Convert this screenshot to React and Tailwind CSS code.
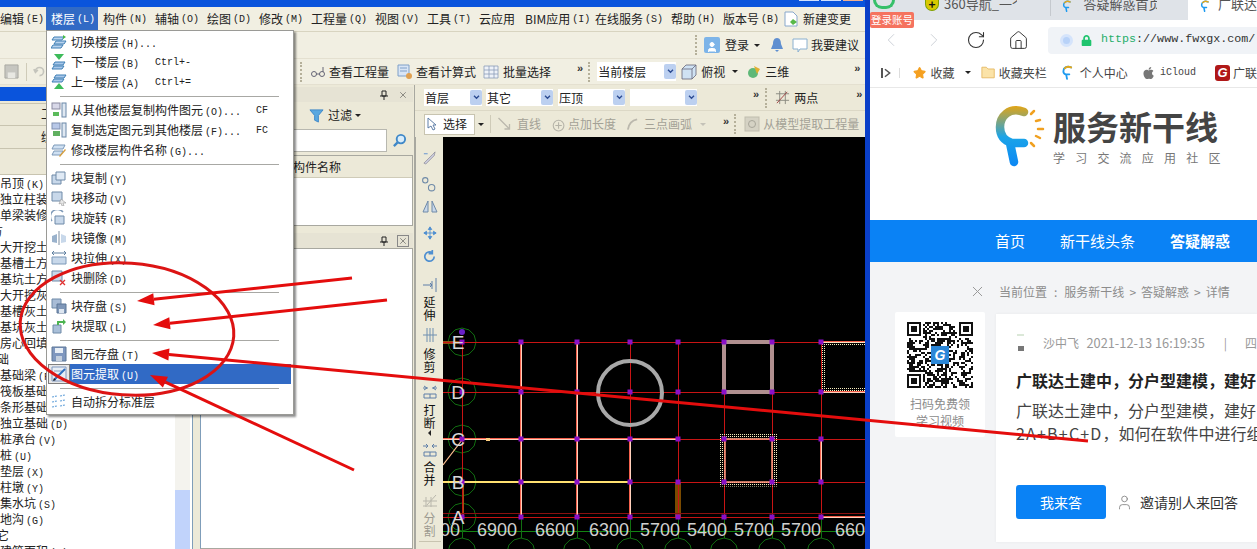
import React from "react";
import { ChevronLeft, ChevronRight, RotateCw, Home, Star, X, User } from "lucide-react";
import { FaApple, FaLock } from "react-icons/fa";

const menuBar = [
  ["编辑", "(E)", "w-[51px] -ml-[5px]"],
  ["楼层", "(L)", "w-[52px] bg-[#316ac5] text-white"],
  ["构件", "(N)", "w-[52px]"],
  ["辅轴", "(O)", "w-[52px]"],
  ["绘图", "(D)", "w-[52px]"],
  ["修改", "(M)", "w-[52px]"],
  ["工程量", "(Q)", "w-[64px]"],
  ["视图", "(V)", "w-[52px]"],
  ["工具", "(T)", "w-[52px]"],
  ["云应用", "", "w-[46px]"],
  ["BIM应用", "(I)", "w-[70px]"],
  ["在线服务", "(S)", "w-[76px]"],
  ["帮助", "(H)", "w-[52px]"],
  ["版本号", "(B)", "w-[63px]"],
];

const tree = [
  ["吊顶", "(K)"], ["独立柱装修", ""], ["单梁装修", ""], ["土方", "", "-ml-[21px]"], ["大开挖土方", ""], ["基槽土方", ""],
  ["基坑土方", ""], ["大开挖灰土", ""], ["基槽灰土", ""], ["基坑灰土", ""], ["房心回填", ""], ["基础", "", "-ml-[15px]"],
  ["基础梁", "(F)"], ["筏板基础", ""], ["条形基础", ""], ["独立基础", "(D)"], ["桩承台", "(V)"], ["桩", "(U)"],
  ["垫层", "(X)"], ["柱墩", "(Y)"], ["集水坑", "(S)"], ["地沟", "(G)"], ["其它", "", "-ml-[15px]"], ["建筑面积", "(A)"],
];

function K({ children }) {
  return <span className="font-['Liberation_Mono',monospace] text-[10px] ml-[2px]">{children}</span>;
}

function Ic({ children, className = "" }) {
  const size = className.includes("w-[") ? "" : "w-[16px] h-[16px]";
  return <svg viewBox="0 0 16 16" className={`shrink-0 ${size} ${className}`}>{children}</svg>;
}

const menuIcons = {
  floors: <><path d="M3 3h10l-2 3H1zM5 7h10l-2 3H3zM2 11h10l-2 3H0z" fill="#b9d3ee" stroke="#3f7fb5" /><path d="M12 1l3 2-3 2z" fill="#46b946" /></>,
  down: <><path d="M3 0h10L8 6z" fill="#3dbb5a" /><path d="M4 8h10l-2 3H2zM3 12h10l-2 3H1z" fill="#a9c8ea" stroke="#3f7fb5" /></>,
  up: <><path d="M5 1h10l-2 3H3zM3 5h10l-2 3H1z" fill="#a9c8ea" stroke="#3f7fb5" /><path d="M3 15h10L8 9z" fill="#3dbb5a" /></>,
  copyIn: <><rect x="1" y="1" width="8" height="6" fill="#d8d8e8" stroke="#8a8aa0" /><path d="M2 10h6v4H2z" fill="#5bbb5b" /><rect x="11" y="1" width="4" height="14" fill="#dfe8f2" stroke="#6b88a8" /></>,
  copyOut: <><rect x="1" y="1" width="8" height="6" fill="#b8c8e8" stroke="#7f8fb0" /><path d="M2 9h7v5H2z" fill="#60b060" /><rect x="11" y="1" width="4" height="14" fill="#dfe8f2" stroke="#6b88a8" /></>,
  rename: <><path d="M3 3h11l-2 4H1zM3 9h9l-2 4H1z" fill="#cfe0f2" stroke="#7c99b8" /><path d="M8 14l6-7 1 1-6 7z" fill="#d8a040" /></>,
  blockCopy: <><path d="M1 5h9v9H1z" fill="#c8d8ea" stroke="#6f8aa8" /><path d="M5 2h9v8H5z" fill="#e0eaf5" stroke="#6f8aa8" /></>,
  blockMove: <><path d="M1 2h10v9H1z" fill="#c8d8ea" stroke="#6f8aa8" /><path d="M10 9l5 4-3 0 1 3-2 0-1-3-2 1z" fill="#e8e8e8" stroke="#888" strokeWidth=".5" /></>,
  blockRotate: <><path d="M4 6h9v8H4z" fill="#c8d8ea" stroke="#6f8aa8" /><path d="M1 11A7 7 0 0 1 12 2" fill="none" stroke="#7f9ab8" strokeWidth="1.5" /></>,
  mirror: <><path d="M1 6l5-2v9l-5-1z" fill="#9ab2cc" /><path d="M15 6l-5-2v9l5-1z" fill="#c8d8ea" /><path d="M8 1v14" stroke="#7f8fa0" /></>,
  stretch: <><path d="M1 7h14v7H1z" fill="#c8d8ea" stroke="#7c99b8" /><path d="M1 3h14M1 3l2-2M1 3l2 2M15 3l-2-2M15 3l-2 2" stroke="#5f7f9f" fill="none" /></>,
  del: <><path d="M1 1h10v10H1z" fill="#c8d8ea" stroke="#6f8aa8" /><path d="M9 10l5 5M14 10l-5 5" stroke="#e03030" strokeWidth="1.3" /></>,
  blockSave: <><path d="M1 1h9v9H1z" fill="#a8bcd6" stroke="#6f8aa8" /><path d="M6 6h9v9H6z" fill="#7f97b8" stroke="#5d7697" /><rect x="8" y="11" width="5" height="4" fill="#dde6f0" /></>,
  blockGet: <><path d="M2 7h8v8H2z" fill="#a9bfd8" stroke="#6f8aa8" /><path d="M6 7V3h6V1l3 3-3 3V5H8v2z" fill="#4cb450" /></>,
  save: <><path d="M1 1h14v14H1z" fill="#7f97bf" stroke="#5d7697" /><rect x="4" y="2" width="8" height="5" fill="#e8eef5" /><rect x="5" y="10" width="6" height="5" fill="#c4cfdd" /></>,
  extract: <><path d="M1 1h14v14H1z" fill="#e8eef5" stroke="#7f97bf" /><path d="M3 5h8M3 9h5" stroke="#8aa0bf" /><path d="M3 14L14 3" stroke="#2f6fc0" strokeWidth="2" /><path d="M2 15l3-1-2-2z" fill="#222" /></>,
  split: <><path d="M1 3l5-1M9 2l5-1M1 8l5-1M9 7l5-1M1 13l5-1M9 12l5-1" stroke="#6fa8dc" strokeWidth="1.2" strokeDasharray="2 1" /></>,
};

const menuGroups = [
  [
    ["切换楼层", "(H)...", "", "floors"],
    ["下一楼层", "(B)", "Ctrl+-", "down"],
    ["上一楼层", "(A)", "Ctrl+=", "up"],
  ],
  [
    ["从其他楼层复制构件图元", "(O)...", "CF", "copyIn"],
    ["复制选定图元到其他楼层", "(F)...", "FC", "copyOut"],
    ["修改楼层构件名称", "(G)...", "", "rename"],
  ],
  [
    ["块复制", "(Y)", "", "blockCopy"],
    ["块移动", "(V)", "", "blockMove"],
    ["块旋转", "(R)", "", "blockRotate"],
    ["块镜像", "(M)", "", "mirror"],
    ["块拉伸", "(X)", "", "stretch"],
    ["块删除", "(D)", "", "del"],
  ],
  [
    ["块存盘", "(S)", "", "blockSave"],
    ["块提取", "(L)", "", "blockGet"],
  ],
  [
    ["图元存盘", "(T)", "", "save"],
    ["图元提取", "(U)", "", "extract", true],
  ],
  [["自动拆分标准层", "", "", "split"]],
];

function FloorMenu() {
  return (
    <div className="absolute left-[46px] top-[30px] w-[248px] h-[385px] z-10 bg-white border border-[#9a9a96] shadow-[2px_2px_2px_rgba(0,0,0,0.45)] text-[12px] text-[#222] pt-[1px]">
      {menuGroups.map((group, g) => (
        <div key={g}>
          {g > 0 && <div className="h-[8px] flex items-center pl-[13px]"><div className="w-[219px] h-px bg-[#a8a8a4]" /></div>}
          {group.map(([label, key, shortcut, icon, active]) => (
            <div key={label} className="h-[20px] flex items-center">
              <div className={`w-[22px] h-[20px] ml-px flex items-center justify-center ${active ? "bg-[#e8e8e8] border border-[#7f7f7f]" : ""}`}>
                <Ic>{menuIcons[icon]}</Ic>
              </div>
              <div className={`flex-1 h-[20px] flex items-center mr-[2px] ${active ? "bg-[#316ac5] text-white" : ""}`}>
                <span className="ml-[1px] w-[84px] whitespace-nowrap">{label}<K>{key}</K></span>
                {shortcut && <span className={`font-['Liberation_Mono',monospace] text-[10px] ${shortcut.length > 2 ? "ml-[0px]" : "ml-[101px]"}`}>{shortcut}</span>}
              </div>
            </div>
          ))}
        </div>
      ))}
    </div>
  );
}

function Grip({ className = "mx-[3px]" }) {
  return <div className={`w-[3px] h-[20px] border-l-2 border-dotted border-[#b5b09a] shrink-0 ${className}`} />;
}

function More({ className = "" }) {
  return <span className={`font-['Liberation_Sans',sans-serif] text-[11px] font-bold leading-none text-[#333] -mt-[6px] ${className}`}>»</span>;
}

function Caret({ className = "" }) {
  return <span className={`w-0 h-0 border-x-[3px] border-x-transparent border-t-[3px] border-t-[#222] ${className}`} />;
}

function Combo({ label, className }) {
  return (
    <div className={`h-[17px] bg-white flex items-center justify-between text-[12px] text-[#222] ${className}`}>
      <span className="pl-px">{label}</span>
      <span className="w-[12px] h-[15px] bg-[#bcd0f0] rounded-[2px] flex items-center justify-center">
        <svg viewBox="0 0 8 6" className="w-[7px] h-[5px]"><path d="M1 1l3 3 3-3" stroke="#2a4a90" strokeWidth="1.6" fill="none" /></svg>
      </span>
    </div>
  );
}

function Pin() {
  return <svg viewBox="0 0 10 10" className="w-[10px] h-[10px]"><path d="M3 1h4v5H3zM1 6h8M5 6v4" stroke="#222" fill="none" /></svg>;
}

function PaneHeader({ boxed }) {
  return (
    <div className="h-[15px] bg-[#e6e3d4] flex items-center justify-end gap-[8px] pr-[4px] shrink-0">
      <Pin />
      <span className={`w-[12px] h-[12px] flex items-center justify-center ${boxed ? "border border-[#888]" : ""}`}>
        <X size={10} strokeWidth={1.2} color="#333" />
      </span>
    </div>
  );
}

function SideTool({ label, gray, icon, caret, top, gap }) {
  return (
    <div className={`flex flex-col items-center ${top} ${gray ? "text-[#9c9a90]" : "text-[#111]"}`}>
      <Ic>{icon}</Ic>
      <div className={`${gap} w-[12px] text-[12px] leading-[13px] text-center`}>{label}</div>
      {caret && <span className="mt-[1px] w-0 h-0 border-y-[3px] border-y-transparent border-r-[3px] border-r-[#222]" />}
    </div>
  );
}

const gridX = [462, 521, 577, 630, 678, 724, 772, 821];
const gridY = [342, 392, 439, 482, 517];
const dims = [["00", 450], ["6900", 497], ["6600", 555], ["6300", 609], ["5700", 660], ["5400", 707], ["5700", 754], ["5700", 801], ["660", 850]];

function hex(cx, cy, r) {
  const pts = [];
  for (let i = 0; i < 12; i++) {
    const a = (i * Math.PI) / 6;
    pts.push(`${(cx + r * Math.cos(a)).toFixed(1)},${(cy + r * Math.sin(a)).toFixed(1)}`);
  }
  return pts.join(" ");
}

function Canvas() {
  return (
    <svg viewBox="443 137 422 412" className="w-[422px] h-[412px] bg-black block shrink-0">
      <defs>
        <pattern id="dots" width="2" height="2" patternUnits="userSpaceOnUse">
          <rect width="1" height="1" fill="#f8efc0" />
        </pattern>
      </defs>
      {gridY.map((y) => <polygon key={y} points={hex(462, y, 14)} fill="none" stroke="#116f11" />)}
      {gridX.map((x) => <polygon key={x} points={hex(x, 552, 14)} fill="none" stroke="#116f11" />)}
      <g shapeRendering="crispEdges">
        <path d="M443 531H865" stroke="#128412" />
        {gridX.map((x) => <path key={x} d={`M${x} 517V538`} stroke="#116f11" />)}
        <path d="M462 342H443" stroke="#8a5010" strokeWidth="3" />
        <path d="M463 482V517" stroke="#a05010" strokeWidth="2" />
        <path d="M678 482V517" stroke="#7a4a00" strokeWidth="6" />
        {gridY.map((y) => <path key={y} d={`M443 ${y}H865`} stroke="#c81414" />)}
        {gridX.map((x) => <path key={x} d={`M${x} 342V517`} stroke="#c81414" />)}
        <path d="M443 513H865" stroke="#8a1010" />
        <path d="M521 342V517M577 342V517M630 439V517M443 439H678M821 517H865M821 439V482M821 342H865M821 392H865" stroke="#f4604c" strokeWidth="2" />
        <path d="M521 342V517M577 342V517M630 439V517M443 439H678M821 517H865M821 439V482M821 342H865M821 392H865" stroke="#ffd0bc" strokeWidth="1" />
        <path d="M443 482H630" stroke="#ffe070" strokeWidth="2" />
        <path d="M486 439h4" stroke="#ffd080" strokeWidth="3" />
      </g>
      <path d="M443 465L462 440" stroke="#ffc090" strokeWidth="1.2" />
      <circle cx="630" cy="393" r="32" fill="none" stroke="#a8a8a8" strokeWidth="4" />
      <rect x="724" y="342" width="48" height="50" fill="none" stroke="#b09090" strokeWidth="4" />
      <rect x="722" y="436" width="53" height="48" fill="none" stroke="url(#dots)" strokeWidth="5" />
      <path d="M865 344H824V390H865" fill="none" stroke="url(#dots)" strokeWidth="4" />
      <path d="M725 439H772V482H725Z" fill="none" stroke="#ff9a80" strokeWidth="1.5" />
      {gridX.flatMap((x) => gridY.map((y) => <rect key={`${x}-${y}`} x={x - 2.5} y={y - 2.5} width="5" height="5" fill="#8a10c8" />))}
      <circle cx="462" cy="332" r="3" fill="#6a20c8" />
      {[["E", 342], ["D", 392], ["C", 439], ["B", 482], ["A", 517]].map(([l, y]) => (
        <text key={l} x="458" y={y + 7} textAnchor="middle" fontSize="19" fill="#d8d8d8" fontFamily="Liberation Sans, sans-serif">{l}</text>
      ))}
      {dims.map(([t, x], i) => (
        <text key={i} x={x} y="536" textAnchor="middle" fontSize="18" fill="#d0d0d0" fontFamily="Liberation Sans, sans-serif">{t}</text>
      ))}
    </svg>
  );
}

function Favicon({ className = "w-[12px] h-[16px]" }) {
  return (
    <svg viewBox="0 0 12 16" className={`shrink-0 ${className}`}>
      <path d="M10 2.5C5 .5 1.5 3 1.500 6.500c0 2 1 3 2.500 3.500h4M4.500 10l1 5" fill="none" stroke="#1c9af0" strokeWidth="2" strokeLinecap="round" />
      <path d="M10 2.500C7 1.200 4.500 1.800 3 3.500" fill="none" stroke="#e5a81a" strokeWidth="2" strokeLinecap="round" />
    </svg>
  );
}

function Logo() {
  return (
    <svg viewBox="0 0 52 64" className="w-[52px] h-[64px] shrink-0">
      <defs>
        <linearGradient id="lg" x1="0" y1="0" x2="0" y2="64" gradientUnits="userSpaceOnUse">
          <stop offset="0" stopColor="#e8a510" />
          <stop offset="0.5" stopColor="#1ba4e8" />
          <stop offset="1" stopColor="#0a84f5" />
        </linearGradient>
      </defs>
      <path d="M29 7C14 1 5 12 5 22c0 9 5 14 12 16h12M15 38l4 19" fill="none" stroke="url(#lg)" strokeWidth="8.500" strokeLinecap="round" />
      <path d="M36 9l3-3M41 16l4-1M43 24h5M41 31l4 2M36 38l3 3" stroke="#f0a020" strokeWidth="2.500" strokeLinecap="round" />
    </svg>
  );
}

function Qr() {
  const cells = [];
  for (let y = 0; y < 33; y++) {
    for (let x = 0; x < 33; x++) {
      const inFinder = (x < 8 && y < 8) || (x > 24 && y < 8) || (x < 8 && y > 24);
      const noise = Math.abs(Math.sin(x * 12.9898 + y * 78.233) * 43758.5453) % 1;
      if (!inFinder && noise < 0.5) cells.push(<rect key={`${x}-${y}`} x={x} y={y} width="1" height="1" />);
    }
  }
  const finder = (x, y) => (
    <g key={`${x}${y}`}>
      <path d={`M${x} ${y}h7v7h-7z M${x + 1} ${y + 1}v5h5v-5z`} fillRule="evenodd" />
      <rect x={x + 2} y={y + 2} width="3" height="3" />
    </g>
  );
  return (
    <svg viewBox="0 0 33 33" className="w-[66px] h-[66px]" shapeRendering="crispEdges" fill="#111">
      {cells}
      {finder(0, 0)}{finder(26, 0)}{finder(0, 26)}
      <rect x="12" y="12" width="9" height="9" fill="#2b87d8" />
      <text x="16.500" y="19" textAnchor="middle" fontSize="7" fontWeight="700" fontStyle="italic" fill="#fff" fontFamily="Liberation Sans, sans-serif">G</text>
    </svg>
  );
}

function Browser() {
  return (
    <div className="w-[387px] h-full flex flex-col bg-[#f3f4f6] relative overflow-hidden">
      {/* tabs */}
      <div className="h-[20px] bg-[#dfe3e8] flex items-start text-[13px] leading-[14px] text-[#555] shrink-0 overflow-hidden">
        <span className="w-[22px] h-[9px] ml-[3px] rounded-b-full border-b-[3px] border-x-[3px] border-[#37c06a] shrink-0" />
        <span className="ml-[30px] w-[14px] h-[11px] rounded-b-full bg-[#d9c800] border border-t-0 border-[#80a000] text-[#111] text-[12px] leading-[7px] text-center font-bold shrink-0">+</span>
        <span className="ml-[5px] w-[78px] whitespace-nowrap overflow-hidden -mt-[3px]">360导航_一个主页</span>
        <div className="ml-[33px] w-px h-[16px] bg-[#c5c9ce] shrink-0" />
        <Favicon className="ml-[11px] w-[10px] h-[12px]" />
        <span className="ml-[11px] w-[78px] whitespace-nowrap overflow-hidden -mt-[3px]">答疑解惑首页-服务</span>
        <div className="ml-[31px] flex-1 h-[20px] bg-white flex items-start pl-[12px]">
          <Favicon className="w-[10px] h-[12px]" />
          <span className="ml-[8px] whitespace-nowrap -mt-[3px]">广联达</span>
        </div>
      </div>
      <span className="absolute left-0 top-[12px] w-[44px] h-[16px] bg-[#f5735f] text-white text-[10.500px] leading-[16px] text-center rounded-[2px] whitespace-nowrap">登录账号</span>

      {/* address bar */}
      <div className="h-[38px] bg-white flex items-center shrink-0 pt-[2px]">
        <ChevronLeft size={22} strokeWidth={1} color="#c9ced4" className="ml-[10px]" />
        <ChevronRight size={22} strokeWidth={1} color="#c9ced4" className="ml-[21px]" />
        <RotateCw size={20} strokeWidth={1.3} color="#333" className="ml-[21px]" />
        <Home size={21} strokeWidth={1.1} color="#333" className="ml-[22px]" />
        <div className="ml-[19px] flex-1 h-[27px] bg-[#f0f3f7] rounded-l-[4px] flex items-center pl-[12px]">
          <span className="w-[13px] h-[13px] rounded-full bg-[#b8d2f8] border-[3px] border-[#d5e4fb]" />
          <FaLock size={11} color="#1fc46e" className="ml-[8px]" />
          <span className="ml-[9px] font-['Liberation_Mono',monospace] text-[11.700px] whitespace-nowrap text-[#333]"><span className="text-[#1fae6a]">https</span>://www.fwxgx.com/</span>
        </div>
      </div>

      {/* bookmarks */}
      <div className="h-[30px] bg-white border-b border-[#e8e8e8] flex items-center text-[12px] text-[#444] shrink-0 whitespace-nowrap">
        <span className="ml-[11px] w-[2px] h-[10px] bg-[#555]" />
        <svg viewBox="0 0 8 10" className="ml-[1px] w-[8px] h-[10px]"><path d="M1 1l5 4-5 4" fill="none" stroke="#555" strokeWidth="1.600" /></svg>
        <span className="ml-[8px] w-px h-[10px] bg-[#ddd]" />
        <Star size={14} fill="#f5a020" color="#f5a020" className="ml-[13px]" />
        <span className="ml-[4px]">收藏</span>
        <Caret className="ml-[10px]" />
        <svg viewBox="0 0 16 14" className="ml-[10px] w-[15px] h-[13px]"><path d="M1 1h5l2 2h7v10H1z" fill="#fbe3a8" stroke="#e5b860" /></svg>
        <span className="ml-[4px]">收藏夹栏</span>
        <Favicon className="ml-[15px] w-[11px] h-[15px]" />
        <span className="ml-[7px] w-[48px]">个人中心</span>
        <FaApple size={14} color="#777" className="ml-[14px]" />
        <span className="ml-[5px] font-['Liberation_Mono',monospace] text-[10px]">iCloud</span>
        <span className="ml-[19px] w-[16px] h-[16px] bg-[#b01818] rounded-[3px] text-white text-[13px] leading-[16px] text-center font-bold italic font-['Liberation_Sans',sans-serif]">G</span>
        <span className="ml-[3px]">广联</span>
      </div>

      {/* logo */}
      <div className="h-[132px] bg-white flex items-start pl-[125px] pt-[17px] shrink-0">
        <Logo />
        <div className="ml-[6px] mt-[3px]">
          <div className="text-[33px] leading-[37px] font-bold text-[#444] whitespace-nowrap">服务新干线</div>
          <div className="text-[12px] leading-[16px] mt-[5px] text-[#777] tracking-[10.200px] whitespace-nowrap">学习交流应用社区</div>
        </div>
      </div>

      {/* nav */}
      <div className="h-[42px] bg-[#0a82f5] text-white text-[15px] flex items-center shrink-0 whitespace-nowrap">
        <span className="ml-[125px]">首页</span>
        <span className="ml-[35px]">新干线头条</span>
        <span className="ml-[35px] font-bold">答疑解惑</span>
      </div>

      {/* breadcrumb */}
      <div className="h-[50px] flex items-center text-[12px] text-[#8c8c8c] whitespace-nowrap shrink-0 pt-[9px]">
        <X size={17} strokeWidth={1.4} color="#999" className="ml-[99px]" />
        <span className="ml-[13px]">当前位置</span>
        <span className="mx-[7px]">:</span>
        <span>服务新干线</span>
        <span className="mx-[5px]">&gt;</span>
        <span>答疑解惑</span>
        <span className="mx-[5px]">&gt;</span>
        <span>详情</span>
      </div>

      {/* content */}
      <div className="flex items-start pl-[25px] whitespace-nowrap">
        <div className="w-[90px] h-[125px] bg-white flex flex-col items-center pt-[10px] text-[12px] leading-[17px] text-[#8c8c8c] rounded-[2px]">
          <Qr />
          <div className="mt-[7px]">扫码免费领</div>
          <div>学习视频</div>
        </div>
        <div className="ml-[11px] mt-[2px] flex-1 h-[228px] bg-white pl-[20px] pt-[20px] overflow-hidden shadow-[0_0_3px_rgba(0,0,0,0.05)]">
          <div className="flex items-center h-[17px] text-[12px] text-[#999]">
            <svg viewBox="0 0 10 17" className="w-[10px] h-[17px] shrink-0"><path d="M1 0h7v2H1z" fill="#dbe8d8" /><rect x="2" y="12" width="6" height="5" fill="#777" /></svg>
            <span className="ml-[17px] w-[49px]">沙中飞</span>
            <span className="text-[12.800px]">2021-12-13 16:19:35</span>
            <span className="ml-[19px]">|</span>
            <span className="ml-[18px]">四</span>
          </div>
          <div className="mt-[19px] text-[16px] leading-[20px] font-bold text-[#222]">广联达土建中，分户型建模，建好</div>
          <div className="mt-[9px] text-[16px] leading-[23px] text-[#444]">广联达土建中，分户型建模，建好</div>
          <div className="text-[16px] leading-[23px] text-[#444]"><span className="tracking-[1.200px]">2A+B+C+D</span>，如何在软件中进行组</div>
          <div className="mt-[40px] flex items-center">
            <div className="w-[90px] h-[34px] bg-[#0a82f5] rounded-[3px] text-white text-[14px] leading-[34px] text-center">我来答</div>
            <User size={17} strokeWidth={1.1} color="#777" className="ml-[10px]" />
            <span className="ml-[7px] text-[14px] text-[#333]">邀请别人来回答</span>
          </div>
        </div>
      </div>
    </div>
  );
}

function Arrow({ x1, y1, x2, y2 }) {
  const a = Math.atan2(y1 - y2, x1 - x2);
  const len = 17;
  const w = 6;
  const bx = x2 + len * Math.cos(a);
  const by = y2 + len * Math.sin(a);
  const nx = -Math.sin(a) * w;
  const ny = Math.cos(a) * w;
  return (
    <g>
      <line x1={x1} y1={y1} x2={bx} y2={by} stroke="#e40d0d" strokeWidth="3" />
      <polygon points={`${x2},${y2} ${bx + nx},${by + ny} ${bx - nx},${by - ny}`} fill="#e40d0d" />
    </g>
  );
}

export default function App() {
  return (
    <div className="relative w-[1257px] h-[549px] overflow-hidden flex font-['Noto_Sans_CJK_SC',sans-serif] text-[12px] text-[#222]">
      <div className="w-[870px] h-full flex flex-col bg-[#ece9d8] border-r-[5px] border-[#0a3fc8] overflow-hidden shrink-0">
        {/* title bar */}
        <div className="h-[7px] bg-[#0a54dc] flex justify-end items-start gap-[2px] pr-[2px] shrink-0">
          <span className="w-[20px] h-[1px] bg-[#cfe0ff]" />
          <span className="w-[20px] h-[1px] bg-[#cfe0ff]" />
          <span className="w-[20px] h-[1px] bg-[#f0b090]" />
        </div>

        {/* menu bar */}
        <div className="h-[25px] bg-[#f1efe2] border-b border-[#d8d4c0] flex items-center shrink-0 whitespace-nowrap">
          {menuBar.map(([label, key, cls]) => (
            <div key={label} className={`h-[24px] flex items-center pl-[5px] shrink-0 ${cls}`}>
              {label}{key && <K>{key}</K>}
            </div>
          ))}
          <svg viewBox="0 0 14 16" className="ml-[3px] w-[14px] h-[16px] shrink-0"><path d="M1 1h8l4 4v10H1z" fill="#fff" stroke="#88a8cc" /><path d="M6 11l3-3 4 3-4 3z" fill="#58b948" /></svg>
          <span className="ml-[5px]">新建变更</span>
        </div>

        {/* toolbar rows */}
        <div className="h-[26px] bg-[#f1efe2] flex items-center justify-end pr-[6px] shrink-0 whitespace-nowrap">
          <Grip />
          <span className="w-[16px] h-[16px] ml-[3px] bg-[#7db4e8] rounded-[2px] flex items-end justify-center"><User size={12} color="#fff" fill="#fff" /></span>
          <span className="ml-[5px]">登录</span>
          <Caret className="ml-[5px]" />
          <svg viewBox="0 0 14 16" className="ml-[10px] w-[14px] h-[16px]"><path d="M7 1c3 0 4 3 4 6l2 5H1l2-5c0-3 1-6 4-6zM5 13h4l-2 2z" fill="#5f8fd0" /></svg>
          <svg viewBox="0 0 16 16" className="ml-[8px] w-[16px] h-[16px]"><path d="M1 2h14v10H8l-2 3v-3H1z" fill="#fff" stroke="#8ab0d0" /></svg>
          <span className="ml-[3px]">我要建议</span>
        </div>

        <div className="h-[27px] bg-[#f1efe2] border-y border-[#e4e0d0] flex items-center shrink-0 whitespace-nowrap">
          <Ic className="ml-[4px] w-[15px] h-[15px]"><path d="M1 1h14v14H1z" fill="#c6c6c0" stroke="#a8a8a0" /><rect x="4" y="9" width="8" height="6" fill="#e8e8e2" /></Ic>
          <div className="ml-[7px] w-px h-[18px] bg-[#cfcbb8]" />
          <Ic className="ml-[6px] w-[13px] h-[13px]"><path d="M3 8a5 5 0 1 1 5 5M1 5l2 4 3-3" fill="none" stroke="#c4c4bc" strokeWidth="2" /></Ic>
          <Grip className="ml-[254px]" />
          <svg viewBox="0 0 16 12" className="ml-[7px] w-[16px] h-[12px] shrink-0"><circle cx="4" cy="8" r="2.500" fill="none" stroke="#667" /><circle cx="12" cy="8" r="2.500" fill="none" stroke="#667" /><path d="M6 8h4M13 6V1" stroke="#667" /></svg>
          <span className="ml-[3px]">查看工程量</span>
          <Ic className="ml-[8px]"><path d="M1 1h11v11H1z" fill="#d9e5f5" stroke="#7f9fc8" /><path d="M3 4h7M3 7h7" stroke="#7f9fc8" /><circle cx="12" cy="12" r="3" fill="#e0a050" /></Ic>
          <span className="ml-[3px]">查看计算式</span>
          <Ic className="ml-[7px]"><path d="M1 2h14v12H1zM1 6h14M1 10h14M6 2v12M11 2v12" fill="#eef2f8" stroke="#8a9db8" strokeWidth=".8" /></Ic>
          <span className="ml-[4px]">批量选择</span>
          <More className="ml-[26px]" />
          <Grip className="ml-[5px] mr-[3px]" />
          <Combo label="当前楼层" className="w-[79px] ml-[3px] !h-[19px]" />
          <Ic className="ml-[5px]"><path d="M1 5l4-4h10v10l-4 4H1zM1 5h10v10M11 5l4-4" fill="#cfe2f3" stroke="#667" strokeWidth=".8" /></Ic>
          <span className="ml-[4px]">俯视</span>
          <Caret className="ml-[7px]" />
          <Ic className="ml-[8px]"><circle cx="7" cy="9" r="5" fill="#5fb878" /><path d="M8 2l6 3-3 5z" fill="#e0b030" /></Ic>
          <span className="ml-[3px]">三维</span>
          <More className="ml-[65px]" />
        </div>

        {/* body */}
        <div className="flex-1 min-h-0 flex">
          {/* left pane */}
          <div className="w-[192px] flex flex-col pt-[2px] shrink-0 border-r border-[#7f9db9] box-content">
            <div className="h-[14px] bg-[#0a54dc] shrink-0" />
            <div className="h-[23px] mt-[2px] pl-[41px] border-y border-[#c8c4b0] leading-[20px] shrink-0">工程设置</div>
            <div className="h-[22px] mt-[1px] pl-[41px] border-b border-[#c8c4b0] leading-[20px] shrink-0">绘图输入</div>
            <div className="h-[26px] border-b border-[#c8c4b0] shrink-0" />
            <div className="flex-1 min-h-0 flex bg-white overflow-hidden">
              <div className="w-[175px] overflow-hidden whitespace-nowrap">
                {tree.map(([label, key, cls]) => (
                  <div key={label} className={`h-[16px] leading-[16px] ${cls || ""}`}>{label}{key && <K>{key}</K>}</div>
                ))}
              </div>
              <div className="w-[15px] bg-[#f4f3ee] flex flex-col justify-end">
                <div className="h-[59px] bg-[#c1d3fb]" />
              </div>
            </div>
          </div>

          {/* mid pane */}
          <div className="w-[221px] flex flex-col pt-[2px] pl-[7px] pr-px shrink-0">
            <PaneHeader />
            <div className="h-[26px] flex items-center justify-end pr-[52px] shrink-0">
              <svg viewBox="0 0 16 16" className="w-[15px] h-[15px]"><path d="M1 2h14L10 8v7l-4-2V8z" fill="#5aa8e0" stroke="#3f88c8" /></svg>
              <span className="ml-[4px]">过滤</span>
              <Caret className="ml-[3px]" />
            </div>
            <div className="h-[25px] flex items-center shrink-0">
              <div className="flex-1 h-[23px] bg-white border border-[#b8b8b0]" />
              <svg viewBox="0 0 16 16" className="ml-[5px] mr-[6px] w-[15px] h-[15px]"><circle cx="9.500" cy="6.500" r="4.500" fill="#d8ecfa" stroke="#3f88c8" strokeWidth="2" /><path d="M6 10l-4 4" stroke="#3f88c8" strokeWidth="2.500" /></svg>
            </div>
            <div className="h-[71px] mt-[2px] bg-white border border-[#a8a8a0] shrink-0">
              <div className="h-[22px] bg-[#ece9d8] border-b border-[#cfcbb8] pl-[92px] leading-[21px]">构件名称</div>
            </div>
            <div className="mt-[7px]"><PaneHeader boxed /></div>
            <div className="flex-1 bg-white border border-[#a8a8a0] border-l-[#7f9db9]" />
          </div>

          {/* drawing side */}
          <div className="flex-1 min-w-0 flex flex-col border-l border-[#a8a8a0]">
            <div className="h-[26px] flex items-center shrink-0 border-b border-[#dcd8c6] whitespace-nowrap">
              <Combo label="首层" className="w-[58px] ml-[9px]" />
              <Combo label="其它" className="w-[67px] ml-[4px]" />
              <Combo label="压顶" className="w-[67px] ml-[5px]" />
              <Combo label="" className="w-[67px] ml-[5px]" />
              <More className="ml-[56px]" />
              <Grip className="ml-[6px]" />
              <Ic className="ml-[7px] w-[15px] h-[15px]"><path d="M1 4h14M1 11h14M5 1v14M11 1v14" stroke="#8a8a80" /><path d="M2 14L13 2" stroke="#a04040" /></Ic>
              <span className="ml-[4px]">两点</span>
              <More className="ml-[38px]" />
            </div>
            <div className="h-[26px] flex items-center shrink-0 whitespace-nowrap text-[#a3a196]">
              <div className="w-[51px] h-[21px] ml-[9px] bg-white border border-[#c8c4b0] flex items-center pl-[2px] text-[#222]">
                <svg viewBox="0 0 10 14" className="w-[10px] h-[14px]"><path d="M1 1v10l3-2 2 4 2-1-2-4h3z" fill="#fff" stroke="#5f7fa8" /></svg>
                <span className="ml-[6px]">选择</span>
              </div>
              <Caret className="ml-[3px]" />
              <div className="ml-[6px] w-px h-[18px] bg-[#cfcbb8]" />
              <svg viewBox="0 0 14 14" className="ml-[6px] w-[15px] h-[14px]"><path d="M1 1l11 11M12 7v5H7" fill="none" stroke="#bbb8ad" strokeWidth="1.300" /></svg>
              <span className="ml-[5px]">直线</span>
              <svg viewBox="0 0 14 14" className="ml-[9px] w-[15px] h-[15px]"><circle cx="8" cy="8" r="5" fill="none" stroke="#b5b3a8" /><path d="M8 5v6M5 8h6" stroke="#b5b3a8" /></svg>
              <span className="ml-[3px]">点加长度</span>
              <svg viewBox="0 0 14 14" className="ml-[10px] w-[13px] h-[14px]"><path d="M2 13C3 7 6 3 12 2" fill="none" stroke="#bbb8ad" strokeWidth="2" /></svg>
              <span className="ml-[5px]">三点画弧</span>
              <Caret className="ml-[8px] !border-t-[#c4c2b8]" />
              <More className="ml-[17px]" />
              <Grip className="ml-[5px]" />
              <Ic className="ml-[7px]"><rect x="1" y="1" width="14" height="14" fill="#d5d2c4" stroke="#c0bdae" /><circle cx="8" cy="8" r="3.500" fill="none" stroke="#a8a69a" /></Ic>
              <span className="ml-[3px]">从模型提取工程量</span>
            </div>
            <div className="flex-1 min-h-0 flex">
              <div className="w-[28px] flex flex-col items-center shrink-0 border-l border-[#a8a8a0] pt-[13px]">
                <Ic className="w-[15px] h-[15px]"><path d="M2 14l9-9 3-3-1 4-9 9z" fill="#ccd" stroke="#778" strokeWidth=".6" /><path d="M2 4h4" stroke="#5f8fd0" /></Ic>
                <Ic className="w-[17px] h-[17px] mt-[11px]"><circle cx="4" cy="4" r="2.500" fill="none" stroke="#6f8aa8" /><circle cx="10" cy="11" r="3" fill="none" stroke="#6f8aa8" /></Ic>
                <Ic className="w-[16px] h-[16px] mt-[5px]"><path d="M1 14L6 3v11zM15 14L10 3v11z" fill="#c9d8ea" stroke="#6f8aa8" /></Ic>
                <Ic className="w-[14px] h-[14px] mt-[12px]"><path d="M8 1v14M1 8h14M8 1l-2 3h4zM8 15l-2-3h4zM1 8l3-2v4zM15 8l-3-2v4z" stroke="#4f8fd0" fill="#4f8fd0" /></Ic>
                <Ic className="w-[15px] h-[15px] mt-[9px]"><path d="M13 8a5 5 0 1 1-2-4M11 1v4h-4" fill="none" stroke="#4f8fd0" strokeWidth="1.800" /></Ic>
                <SideTool label="延伸" top="mt-[13px]" gap="mt-[2px]" icon={<path d="M1 8h9M10 4v8M14 1v14M8 6l2 2-2 2" stroke="#5f7fa8" fill="none" />} />
                <SideTool label="修剪" top="mt-[6px]" gap="mt-[4px]" icon={<path d="M8 1v14M5 1v14M11 1v14M1 8h14" stroke="#6f8fb0" fill="none" />} />
                <SideTool label="打断" caret top="mt-[10px]" gap="mt-[4px]" icon={<path d="M1 5h5M10 5h5M2 3l3 2-3 2M14 3l-3 2 3 2M2 11h12v4H2zM8 11v4" stroke="#5f7fa8" fill="none" />} />
                <SideTool label="合并" top="mt-[5px]" gap="mt-[3px]" icon={<path d="M1 5h5M10 5h5M4 3l2 2-2 2M12 3l-2 2 2 2M2 11h12v4H2zM8 11v4" stroke="#5f7fa8" fill="none" />} />
                <SideTool label="分割" gray top="mt-[7px]" gap="mt-[2px]" icon={<path d="M1 8h14M1 13h14M4 4v10M9 4v10M5 12L14 2" stroke="#b9b7ac" fill="none" />} />
                <div className="mt-[4px] w-[22px] h-px bg-[#c8c4b0]" />
              </div>
              <Canvas />
            </div>
          </div>
        </div>
      </div>

      <Browser />
      <FloorMenu />

      {/* hand-drawn red marks over the screenshot */}
      <svg viewBox="0 0 1257 549" className="absolute inset-0 w-[1257px] h-[549px] z-20 pointer-events-none">
        <ellipse cx="127" cy="329" rx="107" ry="66" fill="none" stroke="#dc1414" strokeWidth="3" transform="rotate(4 127 329)" />
        <Arrow x1={352} y1={278} x2={137} y2={301} />
        <Arrow x1={387} y1={300} x2={153} y2={325} />
        <Arrow x1={1088} y1={441} x2={152} y2={353} />
        <Arrow x1={354} y1={470} x2={150} y2={375} />
      </svg>
    </div>
  );
}
